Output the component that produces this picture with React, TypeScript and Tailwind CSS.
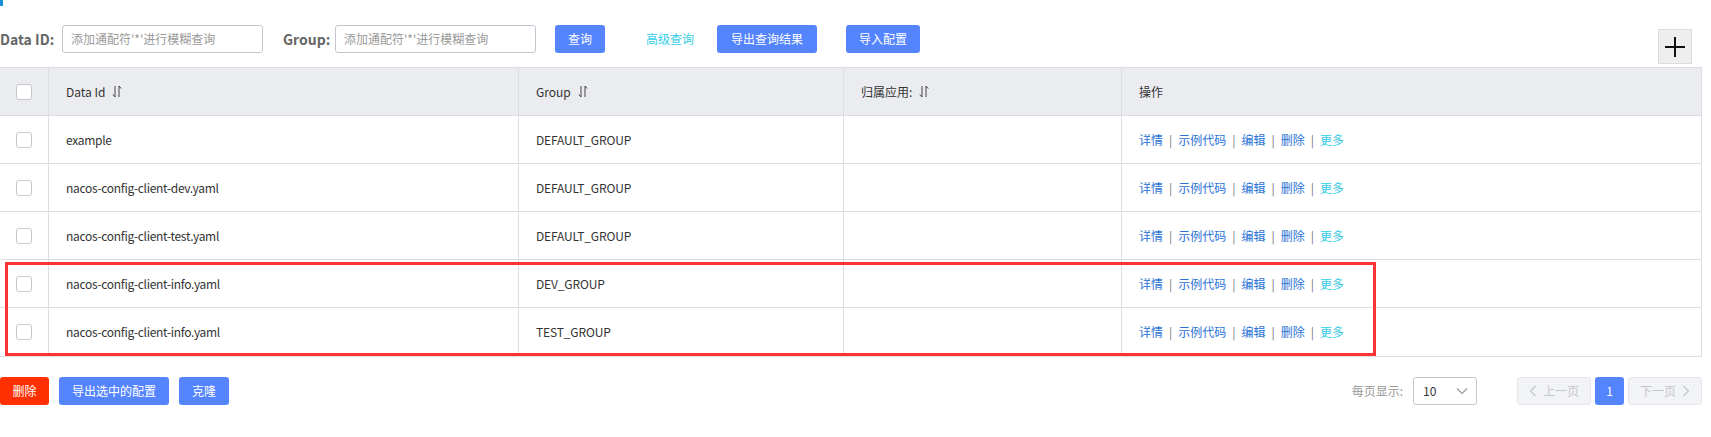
import React from "react";

const font = { fontFamily: '"Noto Sans CJK SC", "Noto Sans", sans-serif' };

function SortIcon() {
  return (
    <svg width="10" height="13" viewBox="0 0 10 13" className="ml-[7px] inline-block" fill="none" stroke="#444" strokeWidth="1">
      <path d="M3 1 V12 L0.8 9.5" />
      <path d="M7 12 V1 L9.2 3.5" />
    </svg>
  );
}

function Checkbox() {
  return <div className="w-4 h-4 rounded-[3px] border border-[#c4c6cf] bg-white" />;
}

const rows = [
  { id: "example", group: "DEFAULT_GROUP" },
  { id: "nacos-config-client-dev.yaml", group: "DEFAULT_GROUP" },
  { id: "nacos-config-client-test.yaml", group: "DEFAULT_GROUP" },
  { id: "nacos-config-client-info.yaml", group: "DEV_GROUP" },
  { id: "nacos-config-client-info.yaml", group: "TEST_GROUP" },
];

function Actions() {
  const sep = <span className="mx-[6px] text-[#777]">|</span>;
  return (
    <div className="flex items-center text-[12px] text-[#2a72d5]">
      <span>详情</span>
      {sep}
      <span>示例代码</span>
      {sep}
      <span>编辑</span>
      {sep}
      <span>删除</span>
      {sep}
      <span className="text-[#33cde5]">更多</span>
    </div>
  );
}

export default function App() {
  return (
    <div className="w-[1711px] h-[437px] bg-white relative overflow-hidden text-[#333]" style={font}>
      <div className="w-[3px] h-[6px] bg-[#1a8fd9]" />
      <div className="flex items-start mt-[19px] w-[1711px]">
        <div className="flex items-center h-[28px]">
          <span className="w-[50px] text-[14px] font-bold text-[#666] leading-none whitespace-nowrap">Data ID:</span>
          <div className="ml-[12px] w-[201px] h-[28px] border border-[#c4c6cf] rounded-[3px] flex items-center px-[8px] text-[12px] text-[#999]">
            添加通配符'*'进行模糊查询
          </div>
          <span className="ml-[20px] w-[43px] text-[14px] font-bold text-[#666] leading-none whitespace-nowrap">Group:</span>
          <div className="ml-[9px] w-[201px] h-[28px] border border-[#c4c6cf] rounded-[3px] flex items-center px-[8px] text-[12px] text-[#999]">
            添加通配符'*'进行模糊查询
          </div>
          <button className="ml-[19px] w-[50px] h-[28px] rounded-[3px] bg-[#5584ff] text-white text-[12px]">查询</button>
          <span className="ml-[40px] w-[50px] text-[12px] text-[#33cde5] text-center">高级查询</span>
          <button className="ml-[22px] w-[100px] h-[28px] rounded-[3px] bg-[#5584ff] text-white text-[12px]">导出查询结果</button>
          <button className="ml-[29px] w-[74px] h-[28px] rounded-[3px] bg-[#5584ff] text-white text-[12px]">导入配置</button>
        </div>
        <div className="ml-auto mr-[19px] mt-[4px] w-[34px] h-[35px] bg-[#eeeeee] border border-[#dddddd] flex items-center justify-center">
          <svg width="22" height="22" viewBox="0 0 22 22">
            <path d="M1 11 H21 M11 1 V21" stroke="#111" strokeWidth="2" />
          </svg>
        </div>
      </div>

      <div className="mt-[3px] w-[1702px] border-r border-b border-t border-[#dcdee3] text-[12px]">
        <div className="flex h-[48px] bg-[#ebecf0] border-b border-[#dcdee3]">
          <div className="w-[49px] border-r border-[#dcdee3] flex items-center justify-center">
            <Checkbox />
          </div>
          <div className="w-[470px] border-r border-[#dcdee3] flex items-center pl-[17px]">
            Data Id <SortIcon />
          </div>
          <div className="w-[325px] border-r border-[#dcdee3] flex items-center pl-[17px]">
            Group <SortIcon />
          </div>
          <div className="w-[278px] border-r border-[#dcdee3] flex items-center pl-[17px]">
            归属应用: <SortIcon />
          </div>
          <div className="flex-1 flex items-center pl-[17px]">操作</div>
        </div>
        {rows.map((r, i) => (
          <div key={i} className={`flex h-[48px] ${i < rows.length - 1 ? "border-b border-[#dcdee3]" : ""}`}>
            <div className="w-[49px] border-r border-[#dcdee3] flex items-center justify-center">
              <Checkbox />
            </div>
            <div className="w-[470px] border-r border-[#dcdee3] flex items-center pl-[17px] tracking-[-0.3px]">{r.id}</div>
            <div className="w-[325px] border-r border-[#dcdee3] flex items-center pl-[17px] tracking-[-0.15px]">{r.group}</div>
            <div className="w-[278px] border-r border-[#dcdee3]" />
            <div className="flex-1 flex items-center pl-[17px]">
              <Actions />
            </div>
          </div>
        ))}
      </div>

      <div className="flex items-center mt-[20px] w-[1702px] h-[28px]">
        <button className="w-[49px] h-[28px] rounded-[3px] bg-[#ff3000] text-white text-[12px]">删除</button>
        <button className="ml-[10px] w-[110px] h-[28px] rounded-[3px] bg-[#5584ff] text-white text-[12px]">导出选中的配置</button>
        <button className="ml-[10px] w-[50px] h-[28px] rounded-[3px] bg-[#5584ff] text-white text-[12px]">克隆</button>
        <div className="ml-auto flex items-center">
          <span className="text-[12px] text-[#999] mr-[10px]">每页显示:</span>
          <div className="w-[64px] h-[28px] border border-[#c4c6cf] rounded-[3px] flex items-center justify-between pl-[9px] pr-[8px] text-[12px] text-[#333]">
            <span>10</span>
            <svg width="12" height="8" viewBox="0 0 12 8" fill="none" stroke="#999" strokeWidth="1.2">
              <path d="M1 1.5 L6 6.5 L11 1.5" />
            </svg>
          </div>
          <div className="ml-[40px] w-[74px] h-[28px] border border-[#e6e7eb] bg-[#f2f3f7] rounded-[3px] flex items-center justify-center text-[12px] text-[#c4c6cf]">
            <svg width="8" height="12" viewBox="0 0 8 12" fill="none" stroke="#c4c6cf" strokeWidth="1.3" className="mr-[6px]">
              <path d="M6.5 1 L1.5 6 L6.5 11" />
            </svg>
            上一页
          </div>
          <div className="ml-[4px] w-[29px] h-[28px] rounded-[3px] bg-[#5584ff] text-white text-[12px] flex items-center justify-center">1</div>
          <div className="ml-[4px] w-[74px] h-[28px] border border-[#e6e7eb] bg-[#f2f3f7] rounded-[3px] flex items-center justify-center text-[12px] text-[#c4c6cf]">
            下一页
            <svg width="8" height="12" viewBox="0 0 8 12" fill="none" stroke="#c4c6cf" strokeWidth="1.3" className="ml-[6px]">
              <path d="M1.5 1 L6.5 6 L1.5 11" />
            </svg>
          </div>
        </div>
      </div>

      <div className="absolute left-[5px] top-[262px] w-[1371px] h-[94px] border-[3px] border-[#ff3333] pointer-events-none" />
    </div>
  );
}
